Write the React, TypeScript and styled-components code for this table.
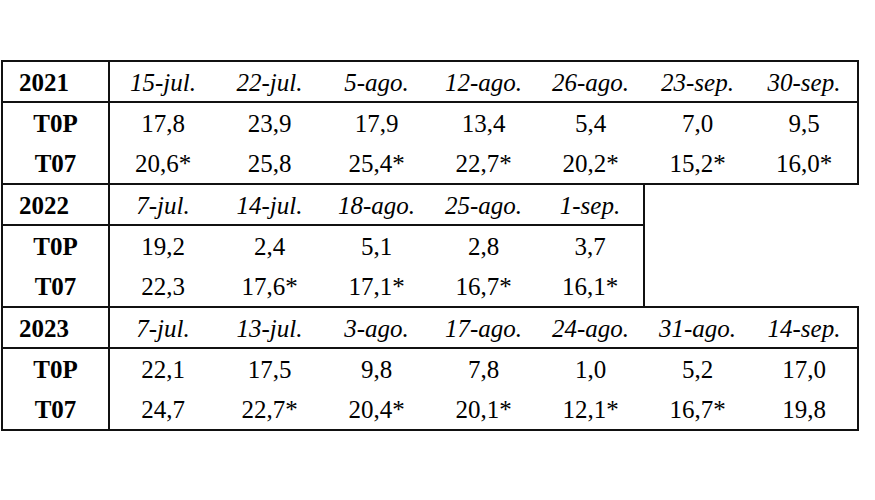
import React, { FunctionComponent } from 'react';
import styled, { createGlobalStyle } from 'styled-components';

const GlobalStyle = createGlobalStyle`
  html, body {
    margin: 0;
    padding: 0;
    background: #fff;
  }
  body {
    font-family: 'Liberation Serif', 'Times New Roman', serif;
    color: #000;
  }
`;

const Page = styled.div`
  width: 875px;
  height: 500px;
  padding-top: 60px;
  padding-left: 1px;
  box-sizing: border-box;
`;

const Table = styled.table`
  border-collapse: collapse;
  table-layout: fixed;
  width: 856px;
  font-family: 'Liberation Serif', 'Times New Roman', serif;
  font-size: 25px;
  line-height: 1;
  color: #000;

  th,
  td {
    font-family: inherit;
    font-size: inherit;
  }
`;

const line = '2px solid #111';

const YearCell = styled.th`
  height: 37px;
  padding: 2px 0 0 16px;
  text-align: left;
  font-weight: 700;
  border: ${line};
`;

const DateCell = styled.th<{ $edge?: boolean }>`
  height: 37px;
  padding: 2px 0 0;
  font-weight: 400;
  font-style: italic;
  text-align: center;
  border-top: ${line};
  border-bottom: ${line};
  border-right: ${(p) => (p.$edge ? line : 'none')};
`;

const LabelCell = styled.th<{ $last?: boolean }>`
  height: 40px;
  padding: 0;
  font-weight: 700;
  text-align: center;
  border-left: ${line};
  border-right: ${line};
  border-bottom: ${(p) => (p.$last ? line : 'none')};
`;

const ValueCell = styled.td<{ $last?: boolean; $edge?: boolean }>`
  height: 40px;
  padding: 0;
  text-align: center;
  border-bottom: ${(p) => (p.$last ? line : 'none')};
  border-right: ${(p) => (p.$edge ? line : 'none')};
`;

const EmptyCell = styled.td`
  padding: 0;
  border: none;
`;

const COLS = 7;

interface Group {
  year: string;
  dates: string[];
  rows: { label: string; values: string[] }[];
}

const groups: Group[] = [
  {
    year: '2021',
    dates: ['15-jul.', '22-jul.', '5-ago.', '12-ago.', '26-ago.', '23-sep.', '30-sep.'],
    rows: [
      { label: 'T0P', values: ['17,8', '23,9', '17,9', '13,4', '5,4', '7,0', '9,5'] },
      { label: 'T07', values: ['20,6*', '25,8', '25,4*', '22,7*', '20,2*', '15,2*', '16,0*'] },
    ],
  },
  {
    year: '2022',
    dates: ['7-jul.', '14-jul.', '18-ago.', '25-ago.', '1-sep.'],
    rows: [
      { label: 'T0P', values: ['19,2', '2,4', '5,1', '2,8', '3,7'] },
      { label: 'T07', values: ['22,3', '17,6*', '17,1*', '16,7*', '16,1*'] },
    ],
  },
  {
    year: '2023',
    dates: ['7-jul.', '13-jul.', '3-ago.', '17-ago.', '24-ago.', '31-ago.', '14-sep.'],
    rows: [
      { label: 'T0P', values: ['22,1', '17,5', '9,8', '7,8', '1,0', '5,2', '17,0'] },
      { label: 'T07', values: ['24,7', '22,7*', '20,4*', '20,1*', '12,1*', '16,7*', '19,8'] },
    ],
  },
];

const Filler: FunctionComponent<{ count: number }> = ({ count }) => (
  <>
    {Array.from({ length: count }, (_, i) => (
      <EmptyCell key={`e${i}`} />
    ))}
  </>
);

const App: FunctionComponent = () => (
  <>
    <GlobalStyle />
    <Page>
      <Table>
        <colgroup>
          {Array.from({ length: COLS + 1 }, (_, i) => (
            <col key={i} style={{ width: 107 }} />
          ))}
        </colgroup>
        {groups.map((g) => {
          const n = g.dates.length;
          return (
            <tbody key={g.year}>
              <tr>
                <YearCell>{g.year}</YearCell>
                {g.dates.map((d, i) => (
                  <DateCell key={d} $edge={i === n - 1}>
                    {d}
                  </DateCell>
                ))}
                <Filler count={COLS - n} />
              </tr>
              {g.rows.map((r, ri) => {
                const last = ri === g.rows.length - 1;
                return (
                  <tr key={r.label}>
                    <LabelCell $last={last}>{r.label}</LabelCell>
                    {r.values.map((v, i) => (
                      <ValueCell key={i} $last={last} $edge={i === n - 1}>
                        {v}
                      </ValueCell>
                    ))}
                    <Filler count={COLS - n} />
                  </tr>
                );
              })}
            </tbody>
          );
        })}
      </Table>
    </Page>
  </>
);

export default App;
